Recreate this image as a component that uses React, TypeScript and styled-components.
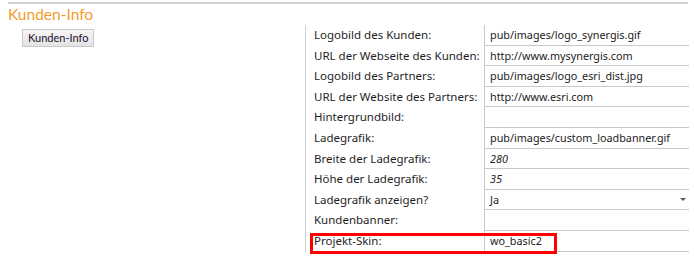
import { Fragment } from "react";
import styled, { createGlobalStyle } from "styled-components";

const GlobalStyle = createGlobalStyle`
  html, body {
    margin: 0;
    padding: 0;
    background: #ffffff;
    font-family: "Noto Sans", "Open Sans", sans-serif;
  }
`

const Page = styled.div`
  width: 694px;
  height: 257px;
  overflow: hidden;
`

const TopRule = styled.div`
  margin: 2px 6px 0 8px;
  height: 2px;
  background: #d4d4d4;
`

const Title = styled.h1`
  margin: 0 0 0 8px;
  height: 21px;
  font-family: Lato, "Noto Sans", sans-serif;
  font-size: 15.5px;
  line-height: 20px;
  font-weight: 400;
  color: #f39c2b;
`

const Body = styled.div`
  display: flex;
  align-items: flex-start;
`

const Side = styled.div`
  width: 283px;
  padding-left: 22px;
`

const TabButton = styled.button`
  height: 18px;
  padding: 0 5px;
  border: 1px solid #c9c9c9;
  background: linear-gradient(#f6f6f6, #e3e3e3);
  font-family: Lato, "Noto Sans", sans-serif;
  font-size: 11px;
  line-height: 16px;
  color: #1c1030;
`

const Table = styled.div`
  position: relative;
  width: 383px;
  border-left: 1px solid #d0d0d0;
  display: grid;
  grid-template-columns: 178px 1fr;
`

const Label = styled.div`
  height: 20.6px;
  padding-left: 8px;
  font-size: 11.5px;
  line-height: 20.6px;
  color: #1e1e1e;
  white-space: nowrap;
`

const Value = styled.div<{ $italic?: boolean }>`
  box-sizing: border-box;
  height: 20.6px;
  padding: 0 3px 0 5px;
  display: flex;
  align-items: center;
  justify-content: space-between;
  border-left: 1px solid #c8c8c8;
  border-bottom: 1px solid #c8c8c8;
  font-size: 10.8px;
  color: #222222;
  font-style: ${p => (p.$italic ? "italic" : "normal")};
  white-space: nowrap;
`

const Caret = styled.span`
  width: 0;
  height: 0;
  border-left: 3px solid transparent;
  border-right: 3px solid transparent;
  border-top: 3px solid #555555;
`

// red annotation frame drawn over the last row
const Highlight = styled.div`
  position: absolute;
  left: 4px;
  bottom: -2px;
  width: 241px;
  height: 15px;
  border: 3px solid #ff0000;
  pointer-events: none;
`

type Row = { label: string; value: string; italic?: boolean; select?: boolean };

const rows: Row[] = [
  { label: "Logobild des Kunden:", value: "pub/images/logo_synergis.gif" },
  { label: "URL der Webseite des Kunden:", value: "http://www.mysynergis.com" },
  { label: "Logobild des Partners:", value: "pub/images/logo_esri_dist.jpg" },
  { label: "URL der Website des Partners:", value: "http://www.esri.com" },
  { label: "Hintergrundbild:", value: "" },
  { label: "Ladegrafik:", value: "pub/images/custom_loadbanner.gif" },
  { label: "Breite der Ladegrafik:", value: "280", italic: true },
  { label: "Höhe der Ladegrafik:", value: "35", italic: true },
  { label: "Ladegrafik anzeigen?", value: "Ja", select: true },
  { label: "Kundenbanner:", value: "" },
  { label: "Projekt-Skin:", value: "wo_basic2" },
];

const App = () => {
  return (
    <Page>
      <GlobalStyle />
      <TopRule />
      <Title>Kunden-Info</Title>
      <Body>
        <Side>
          <TabButton>Kunden-Info</TabButton>
        </Side>
        <Table>
          {rows.map(r => (
            <Fragment key={r.label}>
              <Label>{r.label}</Label>
              <Value $italic={r.italic}>
                <span>{r.value}</span>
                {r.select && <Caret />}
              </Value>
            </Fragment>
          ))}
          <Highlight />
        </Table>
      </Body>
    </Page>
  );
}

export default App;
